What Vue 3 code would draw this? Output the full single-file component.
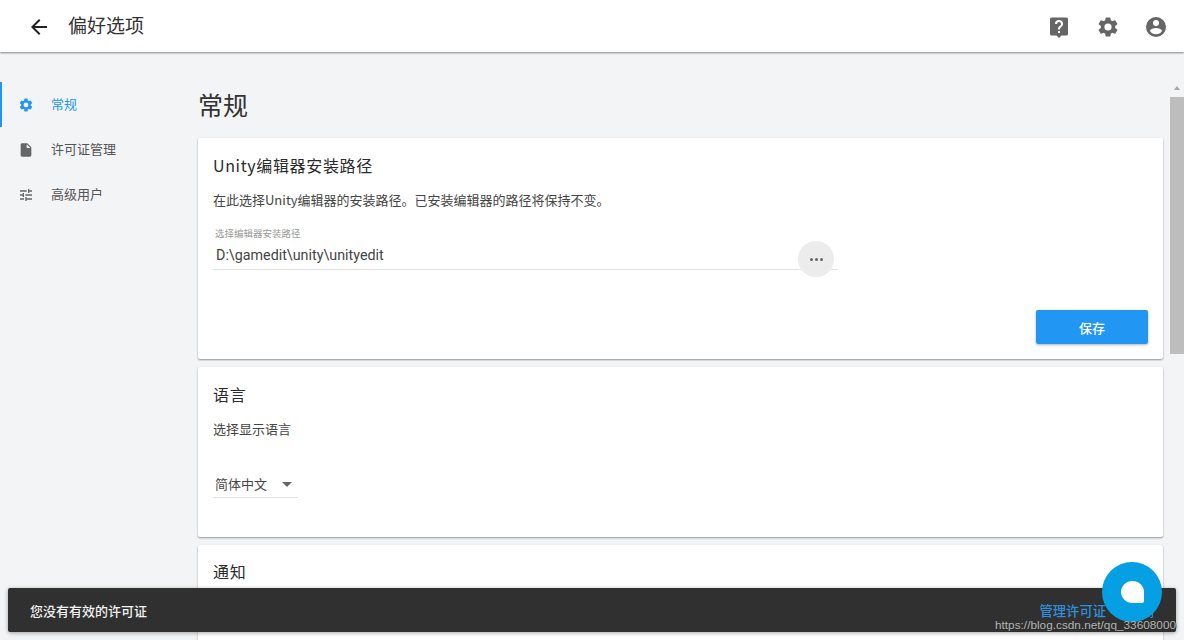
<script setup>
const navItems = [
  { label: '常规', icon: 'gear', active: true },
  { label: '许可证管理', icon: 'file', active: false },
  { label: '高级用户', icon: 'tune', active: false }
]
const gear = 'M19.14 12.94c.04-.3.06-.61.06-.94 0-.32-.02-.64-.07-.94l2.03-1.58a.49.49 0 0 0 .12-.61l-1.92-3.32a.49.49 0 0 0-.59-.22l-2.39.96c-.5-.38-1.03-.7-1.62-.94l-.36-2.54a.48.48 0 0 0-.48-.41h-3.84a.48.48 0 0 0-.47.41l-.36 2.54c-.59.24-1.13.57-1.62.94l-2.39-.96a.49.49 0 0 0-.59.22L2.74 8.87a.48.48 0 0 0 .12.61l2.03 1.58c-.05.3-.09.63-.09.94s.02.64.07.94l-2.03 1.58a.49.49 0 0 0-.12.61l1.92 3.32c.12.22.37.29.59.22l2.39-.96c.5.38 1.03.7 1.62.94l.36 2.54c.05.24.24.41.48.41h3.84c.24 0 .44-.17.47-.41l.36-2.54c.59-.24 1.13-.56 1.62-.94l2.39.96c.22.08.47 0 .59-.22l1.92-3.32a.48.48 0 0 0-.12-.61l-2.01-1.58zM12 15.6A3.6 3.6 0 1 1 12 8.4a3.6 3.6 0 0 1 0 7.2z'
</script>

<template>
  <div class="page">
    <header class="topbar">
      <div class="top-left">
        <svg class="back" viewBox="0 0 24 24"><path d="M20 11H7.83l5.59-5.59L12 4l-8 8 8 8 1.41-1.41L7.83 13H20z" /></svg>
        <span class="top-title">偏好选项</span>
      </div>
      <div class="top-right">
        <svg class="top-icon" viewBox="0 0 24 24"><path d="M4.5 2.5h15a1.5 1.5 0 0 1 1.5 1.5v15a1.5 1.5 0 0 1-1.5 1.5h-5L12 23l-2.500-2.500h-5A1.500 1.500 0 0 1 3 19V4a1.500 1.500 0 0 1 1.500-1.500zM11 16v2h2v-2zM12 5a4 4 0 0 0-4 4h2a2 2 0 1 1 4 0c0 2-3 1.800-3 5.500h2c0-2.500 3-2.800 3-5.500a4 4 0 0 0-4-4z" fill-rule="evenodd" /></svg>
        <svg class="top-icon" viewBox="0 0 24 24"><path :d="gear" /></svg>
        <svg class="top-icon" viewBox="0 0 24 24"><path d="M12 2a10 10 0 1 0 0 20 10 10 0 0 0 0-20zm0 3a3 3 0 1 1 0 6 3 3 0 0 1 0-6zm0 14.200a7.200 7.200 0 0 1-6-3.220c.03-1.990 4-3.080 6-3.080s5.970 1.090 6 3.080a7.200 7.200 0 0 1-6 3.220z" /></svg>
      </div>
    </header>

    <div class="body">
      <nav class="sidebar">
        <div v-for="item in navItems" :key="item.label" class="nav-item" :class="{ active: item.active }">
          <svg class="nav-icon" viewBox="0 0 24 24">
            <path v-if="item.icon === 'gear'" :d="gear" />
            <path v-else-if="item.icon === 'file'" d="M14 2H6c-1.100 0-2 .9-2 2v16c0 1.100.9 2 2 2h12c1.100 0 2-.9 2-2V8l-6-6zm-1 7V3.500L18.500 9H13z" />
            <path v-else d="M3 17v2h6v-2H3zM3 5v2h10V5H3zm10 16v-2h8v-2h-8v-2h-2v6h2zM7 9v2H3v2h4v2h2V9H7zm14 4v-2H11v2h10zm-6-4h2V7h4V5h-4V3h-2v6z" />
          </svg>
          <span>{{ item.label }}</span>
        </div>
      </nav>

      <main class="content">
        <h1 class="page-title">常规</h1>

        <section class="card card-path">
          <h2 class="card-title">Unity编辑器安装路径</h2>
          <p class="card-text">在此选择Unity编辑器的安装路径。已安装编辑器的路径将保持不变。</p>
          <div class="path-field">
            <div class="field-label">选择编辑器安装路径</div>
            <div class="field-value">D:\gamedit\unity\unityedit</div>
            <div class="more"><span></span><span></span><span></span></div>
          </div>
          <div class="actions"><button class="save">保存</button></div>
        </section>

        <section class="card card-lang">
          <h2 class="card-title">语言</h2>
          <p class="card-text lang-text">选择显示语言</p>
          <div class="select"><span>简体中文</span><i class="caret"></i></div>
        </section>

        <section class="card card-notify">
          <h2 class="card-title">通知</h2>
        </section>
      </main>

      <div class="scrollbar">
        <i class="scroll-up"></i>
        <div class="thumb"></div>
      </div>
    </div>

    <div class="snackbar">
      <span class="snack-text">您没有有效的许可证</span>
      <span class="snack-action">管理许可证</span>
      <span class="snack-close">关闭</span>
    </div>

    <div class="fab"><i class="bubble"></i></div>
    <div class="watermark">https://blog.csdn.net/qq_33608000</div>
  </div>
</template>

<style>
html, body { margin: 0; overflow: hidden; }
</style>

<style scoped>
.page {
  width: 1184px;
  height: 640px;
  position: relative;
  overflow: hidden;
  display: flex;
  flex-direction: column;
  background: #f2f4f5;
  font-family: "Noto Sans CJK SC", Roboto, sans-serif;
  color: #2b2b2b;
}
.topbar {
  height: 52px;
  flex: none;
  display: flex;
  align-items: center;
  justify-content: space-between;
  background: #fff;
  box-shadow: 0 1px 2px rgba(0, 0, 0, .45);
  position: relative;
  z-index: 2;
}
.top-left { display: flex; align-items: center; padding-left: 27px; }
.back { width: 24px; height: 24px; fill: #222; margin-right: 17px; margin-top: 2px; }
.top-title { font-size: 19px; color: #333; line-height: 24px; margin-top: -3px; }
.top-right { display: flex; gap: 24.500px; padding-right: 16px; }
.top-icon { width: 24px; height: 24px; fill: #666; margin-top: 1px; }
.body { flex: 1; display: flex; min-height: 0; }
.sidebar { width: 198px; flex: none; padding-top: 30px; box-sizing: border-box; }
.nav-item {
  height: 45px;
  display: flex;
  align-items: center;
  padding-left: 18px;
  font-size: 13px;
  line-height: 18px;
  color: #555;
  box-sizing: border-box;
}
.nav-item span { margin-top: -2px; margin-left: -1px; }
.nav-item.active {
  color: #2196f3;
  border-left: 2px solid #2196f3;
  padding-left: 16px;
}
.nav-icon { width: 16px; height: 16px; fill: #666; margin-right: 18px; }
.active .nav-icon { fill: #2196f3; }
.content { width: 965px; flex: none; }
.page-title {
  margin: 34px 0 16px;
  font-size: 25px;
  font-weight: 400;
  line-height: 36px;
  color: #333;
}
.card {
  background: #fff;
  border-radius: 2px;
  box-shadow: 0 1px 2px rgba(0, 0, 0, .4);
  padding: 0 15px;
  box-sizing: border-box;
  margin-bottom: 8px;
}
.card-path { height: 221px; padding-top: 15px; }
.card-lang { height: 170px; padding-top: 15px; }
.card-notify { height: 120px; padding-top: 14px; }
.card-title {
  margin: 0;
  font-size: 16px;
  font-weight: 400;
  line-height: 24px;
  color: #2b2b2b;
  letter-spacing: .65px;
}
.card-text { margin: 13px 0 0; font-size: 13px; line-height: 20px; color: #444; }
.path-field {
  position: relative;
  width: 625px;
  height: 43px;
  margin-top: 17px;
  border-bottom: 1px solid #e2e2e2;
  box-sizing: border-box;
  padding-left: 2px;
}
.field-label { font-size: 9.500px; line-height: 13px; color: #999; }
.field-value { font-size: 14.300px; line-height: 20px; margin-top: 5px; padding-left: 1px; color: #444; font-family: Roboto, sans-serif; }
.more {
  position: absolute;
  right: 4px;
  top: 14px;
  width: 36px;
  height: 36px;
  border-radius: 50%;
  background: #ececec;
  display: flex;
  align-items: center;
  justify-content: center;
  gap: 2px;
}
.more span { width: 3px; height: 3px; border-radius: 50%; background: #666; }
.actions { display: flex; justify-content: flex-end; margin-top: 40px; }
.save {
  width: 112px;
  height: 34px;
  border: 0;
  border-radius: 2px;
  background: #2196f3;
  color: #fff;
  font: 500 13px "Noto Sans CJK SC", sans-serif;
  box-shadow: 0 1px 3px rgba(0, 0, 0, .3);
}
.select {
  width: 85px;
  height: 28px;
  margin-top: 31px;
  border-bottom: 1px solid #e2e2e2;
  box-sizing: border-box;
  display: flex;
  align-items: center;
  padding-left: 2px;
  font-size: 13px;
  color: #444;
}
.caret {
  margin-left: 15px;
  margin-top: 2px;
  border-left: 5.500px solid transparent;
  border-right: 5.500px solid transparent;
  border-top: 5px solid #666;
}
.scrollbar { width: 14px; margin-left: 7px; flex: none; padding-top: 34px; }
.scroll-up {
  display: block;
  width: 0;
  margin: 0 auto 7px;
  border-left: 3.500px solid transparent;
  border-right: 3.500px solid transparent;
  border-bottom: 4px solid #a6a6a6;
}
.thumb { height: 257px; background: #bdbdbd; }
.snackbar {
  position: absolute;
  left: 8px;
  top: 588px;
  width: 1168px;
  height: 44px;
  background: #303030;
  border-radius: 2px;
  box-shadow: 0 1px 4px rgba(0, 0, 0, .35);
  z-index: 3;
  display: flex;
  align-items: center;
  font-size: 13px;
  font-weight: 500;
  color: #f2f2f2;
  padding: 0 22px;
  box-sizing: border-box;
}
.snack-text { flex: 1; margin-top: 1px; }
.snack-action { color: #2f8fdc; margin-top: 1px; font-size: 13.300px; }
.snack-close { color: #2f8fdc; margin-left: 22px; margin-top: 1px; }
.fab {
  position: absolute;
  left: 1102px;
  top: 562px;
  width: 60px;
  height: 60px;
  border-radius: 50%;
  background: #04a0e3;
  z-index: 4;
  display: flex;
  align-items: center;
  justify-content: center;
}
.bubble {
  width: 23px;
  height: 22px;
  background: #fff;
  border-radius: 50% 50% 2px 50%;
}
.watermark {
  position: absolute;
  left: 995px;
  top: 618px;
  z-index: 5;
  font: 11.800px/15px "Liberation Sans", sans-serif;
  color: #b4b4b4;
  white-space: nowrap;
  text-shadow: 1px 1px 0 rgba(40, 40, 40, .6);
}
</style>
